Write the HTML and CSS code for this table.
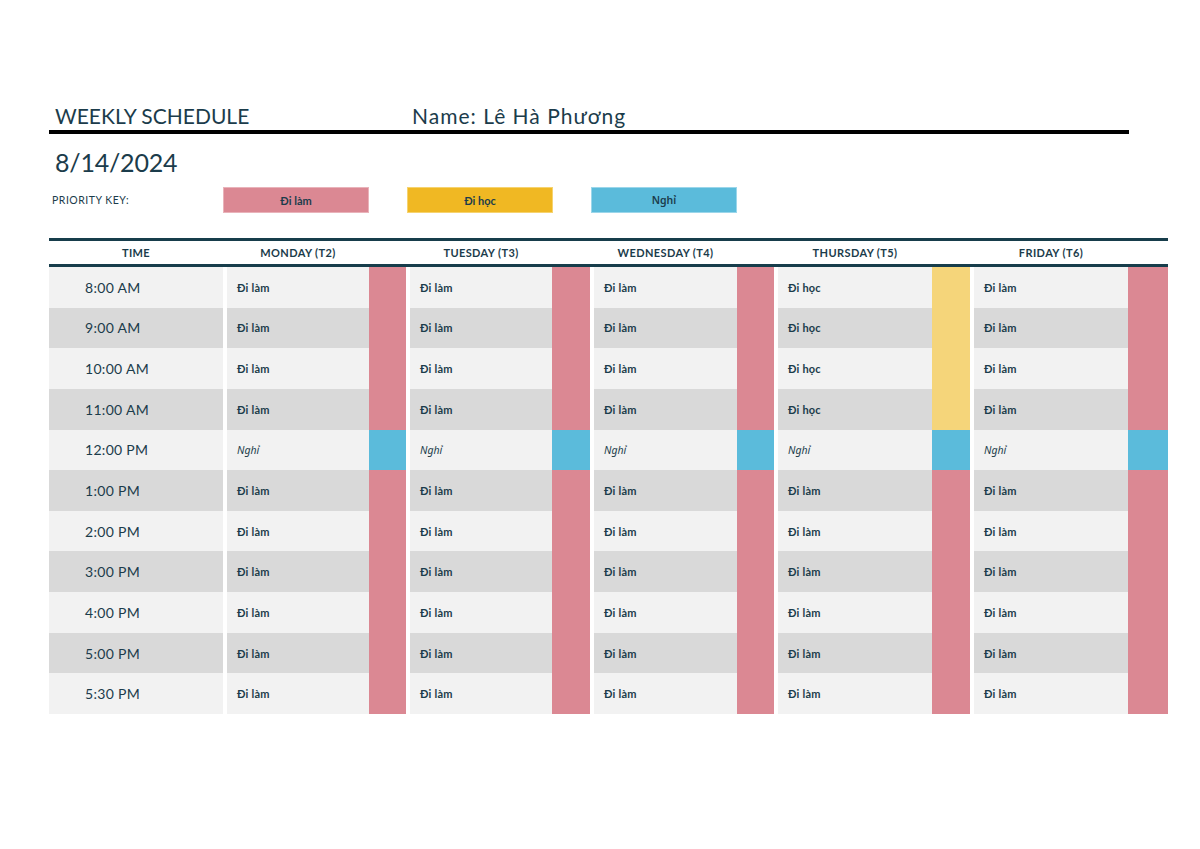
FILE: index.html
```html
<!DOCTYPE html>
<html lang="vi">
<head>
<meta charset="utf-8">
<title>Weekly Schedule</title>
<link rel="stylesheet" href="styles.css">
</head>
<body>
<div class="page">
  <header class="title-row">
    <h1 class="title">WEEKLY SCHEDULE</h1>
    <div class="name">Name: Lê Hà Phương</div>
  </header>
  <div class="date">8/14/2024</div>
  <div class="key">
    <span class="key-label">PRIORITY KEY:</span>
    <span class="key-box work">Đi làm</span>
    <span class="key-box study">Đi học</span>
    <span class="key-box rest">Nghỉ</span>
  </div>

  <div class="schedule">
    <div class="row head">
      <div class="hcell">TIME</div>
      <div class="hcell day">MONDAY (T2)</div>
      <div class="hcell day">TUESDAY (T3)</div>
      <div class="hcell day">WEDNESDAY (T4)</div>
      <div class="hcell day">THURSDAY (T5)</div>
      <div class="hcell day">FRIDAY (T6)</div>
    </div>

    <div class="row light">
      <div class="time">8:00 AM</div>
      <div class="cell"><span class="txt">Đi làm</span><span class="bar work"></span></div>
      <div class="cell"><span class="txt">Đi làm</span><span class="bar work"></span></div>
      <div class="cell"><span class="txt">Đi làm</span><span class="bar work"></span></div>
      <div class="cell"><span class="txt">Đi học</span><span class="bar study"></span></div>
      <div class="cell"><span class="txt">Đi làm</span><span class="bar work"></span></div>
    </div>
    <div class="row dark">
      <div class="time">9:00 AM</div>
      <div class="cell"><span class="txt">Đi làm</span><span class="bar work"></span></div>
      <div class="cell"><span class="txt">Đi làm</span><span class="bar work"></span></div>
      <div class="cell"><span class="txt">Đi làm</span><span class="bar work"></span></div>
      <div class="cell"><span class="txt">Đi học</span><span class="bar study"></span></div>
      <div class="cell"><span class="txt">Đi làm</span><span class="bar work"></span></div>
    </div>
    <div class="row light">
      <div class="time">10:00 AM</div>
      <div class="cell"><span class="txt">Đi làm</span><span class="bar work"></span></div>
      <div class="cell"><span class="txt">Đi làm</span><span class="bar work"></span></div>
      <div class="cell"><span class="txt">Đi làm</span><span class="bar work"></span></div>
      <div class="cell"><span class="txt">Đi học</span><span class="bar study"></span></div>
      <div class="cell"><span class="txt">Đi làm</span><span class="bar work"></span></div>
    </div>
    <div class="row dark">
      <div class="time">11:00 AM</div>
      <div class="cell"><span class="txt">Đi làm</span><span class="bar work"></span></div>
      <div class="cell"><span class="txt">Đi làm</span><span class="bar work"></span></div>
      <div class="cell"><span class="txt">Đi làm</span><span class="bar work"></span></div>
      <div class="cell"><span class="txt">Đi học</span><span class="bar study"></span></div>
      <div class="cell"><span class="txt">Đi làm</span><span class="bar work"></span></div>
    </div>
    <div class="row light">
      <div class="time">12:00 PM</div>
      <div class="cell"><span class="txt it">Nghỉ</span><span class="bar rest"></span></div>
      <div class="cell"><span class="txt it">Nghỉ</span><span class="bar rest"></span></div>
      <div class="cell"><span class="txt it">Nghỉ</span><span class="bar rest"></span></div>
      <div class="cell"><span class="txt it">Nghỉ</span><span class="bar rest"></span></div>
      <div class="cell"><span class="txt it">Nghỉ</span><span class="bar rest"></span></div>
    </div>
    <div class="row dark">
      <div class="time">1:00 PM</div>
      <div class="cell"><span class="txt">Đi làm</span><span class="bar work"></span></div>
      <div class="cell"><span class="txt">Đi làm</span><span class="bar work"></span></div>
      <div class="cell"><span class="txt">Đi làm</span><span class="bar work"></span></div>
      <div class="cell"><span class="txt">Đi làm</span><span class="bar work"></span></div>
      <div class="cell"><span class="txt">Đi làm</span><span class="bar work"></span></div>
    </div>
    <div class="row light">
      <div class="time">2:00 PM</div>
      <div class="cell"><span class="txt">Đi làm</span><span class="bar work"></span></div>
      <div class="cell"><span class="txt">Đi làm</span><span class="bar work"></span></div>
      <div class="cell"><span class="txt">Đi làm</span><span class="bar work"></span></div>
      <div class="cell"><span class="txt">Đi làm</span><span class="bar work"></span></div>
      <div class="cell"><span class="txt">Đi làm</span><span class="bar work"></span></div>
    </div>
    <div class="row dark">
      <div class="time">3:00 PM</div>
      <div class="cell"><span class="txt">Đi làm</span><span class="bar work"></span></div>
      <div class="cell"><span class="txt">Đi làm</span><span class="bar work"></span></div>
      <div class="cell"><span class="txt">Đi làm</span><span class="bar work"></span></div>
      <div class="cell"><span class="txt">Đi làm</span><span class="bar work"></span></div>
      <div class="cell"><span class="txt">Đi làm</span><span class="bar work"></span></div>
    </div>
    <div class="row light">
      <div class="time">4:00 PM</div>
      <div class="cell"><span class="txt">Đi làm</span><span class="bar work"></span></div>
      <div class="cell"><span class="txt">Đi làm</span><span class="bar work"></span></div>
      <div class="cell"><span class="txt">Đi làm</span><span class="bar work"></span></div>
      <div class="cell"><span class="txt">Đi làm</span><span class="bar work"></span></div>
      <div class="cell"><span class="txt">Đi làm</span><span class="bar work"></span></div>
    </div>
    <div class="row dark">
      <div class="time">5:00 PM</div>
      <div class="cell"><span class="txt">Đi làm</span><span class="bar work"></span></div>
      <div class="cell"><span class="txt">Đi làm</span><span class="bar work"></span></div>
      <div class="cell"><span class="txt">Đi làm</span><span class="bar work"></span></div>
      <div class="cell"><span class="txt">Đi làm</span><span class="bar work"></span></div>
      <div class="cell"><span class="txt">Đi làm</span><span class="bar work"></span></div>
    </div>
    <div class="row light">
      <div class="time">5:30 PM</div>
      <div class="cell"><span class="txt">Đi làm</span><span class="bar work"></span></div>
      <div class="cell"><span class="txt">Đi làm</span><span class="bar work"></span></div>
      <div class="cell"><span class="txt">Đi làm</span><span class="bar work"></span></div>
      <div class="cell"><span class="txt">Đi làm</span><span class="bar work"></span></div>
      <div class="cell"><span class="txt">Đi làm</span><span class="bar work"></span></div>
    </div>
  </div>
</div>
</body>
</html>
```

FILE: styles.css
```css
* { box-sizing: border-box; }

html, body {
  margin: 0;
  padding: 0;
  background: #ffffff;
}

body {
  font-family: Lato, "Noto Sans", "Liberation Sans", sans-serif;
  color: #1b3c4b;
}

.page {
  padding: 103px 0 0 49px;
  width: 1200px;
}

/* Title */
.title-row {
  width: 1080px;
  display: flex;
  align-items: flex-end;
  padding: 0 0 2px 6px;
  border-bottom: 4px solid #000000;
}

.title {
  margin: 0;
  width: 357px;
  font-size: 21px;
  font-weight: 400;
  line-height: 25px;
  letter-spacing: 0;
}

.name {
  font-size: 21px;
  line-height: 25px;
  letter-spacing: 1px;
}

.date {
  padding: 12px 0 0 6px;
  font-size: 25px;
  line-height: 32px;
  height: 53px;
  letter-spacing: -0.2px;
}

/* Priority key */
.key {
  display: flex;
  align-items: center;
  height: 26px;
}

.key-label {
  width: 174px;
  padding-left: 3px;
  font-size: 10.5px;
  letter-spacing: 0.5px;
}

.key-box {
  width: 146px;
  height: 26px;
  margin-right: 38px;
  display: flex;
  align-items: center;
  justify-content: center;
  font-size: 11px;
  font-weight: 700;
}

.key-box.work { background: #db8893; border: 1px solid #e9b3ba; }
.key-box.study { background: #f0b823; border: 1px solid #f6d36f; }
.key-box.rest {
  background: #5bbbdb;
  border: 1px solid #9bd6ea;
  font-family: "Noto Sans", Lato, sans-serif;
  font-weight: 600;
  font-size: 10.5px;
}

/* Schedule table */
.schedule {
  margin-top: 25px;
  width: 1119px;
}

.row {
  display: grid;
  grid-template-columns: 174px 179px 180px 180px 192px 194px;
  column-gap: 4px;
  height: 40.65px;
}

.row.head {
  height: 29px;
  border-top: 3px solid #173d4b;
  border-bottom: 3px solid #173d4b;
}

.hcell {
  display: flex;
  align-items: center;
  justify-content: center;
  font-size: 11px;
  font-weight: 700;
  letter-spacing: 0.4px;
}

.hcell.day:nth-child(2) { padding-right: 37px; }
.hcell.day:nth-child(3) { padding-right: 38px; }
.hcell.day:nth-child(4) { padding-right: 37px; }
.hcell.day:nth-child(5) { padding-right: 38px; }
.hcell.day:nth-child(6) { padding-right: 40px; }

.light > .time, .light > .cell { background: #f2f2f2; }
.dark > .time, .dark > .cell { background: #d9d9d9; }

.time {
  display: flex;
  align-items: center;
  padding-left: 36px;
  font-size: 14px;
  letter-spacing: 0.3px;
}

.cell {
  display: flex;
  align-items: stretch;
}

.txt {
  flex: 1;
  display: flex;
  align-items: center;
  padding-left: 10px;
  font-size: 11px;
  font-weight: 700;
  letter-spacing: 0.2px;
}

.txt.it {
  font-family: "Noto Sans", Lato, sans-serif;
  font-style: italic;
  font-weight: 400;
  font-size: 10.5px;
  letter-spacing: 0;
}

.bar { flex: none; width: 37px; }
.cell:nth-child(2) .bar { width: 37px; }
.cell:nth-child(3) .bar { width: 38px; }
.cell:nth-child(4) .bar { width: 37px; }
.cell:nth-child(5) .bar { width: 38px; }
.cell:nth-child(6) .bar { width: 40px; }

.bar.work { background: #db8893; }
.bar.study { background: #f5d57a; }
.bar.rest { background: #5bbbdb; }
```
